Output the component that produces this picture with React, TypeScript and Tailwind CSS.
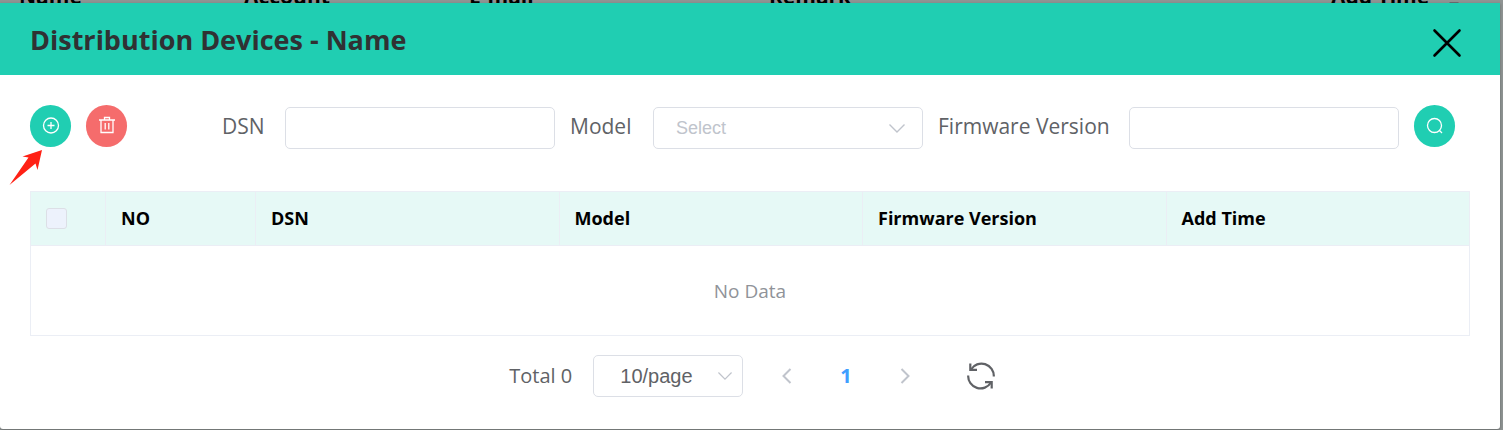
import type { ReactNode } from "react";

const listColumns = ["Name", "Account", "E-mail", "Remark", "Add Time"];
const deviceColumns = ["NO", "DSN", "Model", "Firmware Version", "Add Time"];

function RoundButton({ label, color, children }: { label: string; color: string; children: ReactNode }) {
  return (
    <button
      type="button"
      aria-label={label}
      className={`flex h-[42px] w-[41px] shrink-0 items-center justify-center rounded-full ${color}`}
    >
      <svg viewBox="0 0 20 20" className="size-5" fill="none" stroke="#fff" strokeWidth="1.3">
        {children}
      </svg>
    </button>
  );
}

function Chevron({ className }: { className: string }) {
  return (
    <svg viewBox="0 0 16 9" className={className} fill="none" stroke="#c0c4cc" strokeWidth="1.4">
      <path d="M0.5 0.5 L8 8 L15.5 0.5" />
    </svg>
  );
}

function BackgroundList() {
  return (
    <table aria-hidden="true" className="absolute inset-x-0 -top-5 w-full table-fixed text-left text-[21px] leading-8 font-bold text-black">
      <colgroup>
        <col className="w-[225px]" />
        <col className="w-[225px]" />
        <col className="w-[300px]" />
        <col />
        <col className="w-[191px]" />
      </colgroup>
      <thead>
        <tr>
          {listColumns.map((name) => (
            <th key={name} className="pl-[19px]">
              {name === "Add Time" ? (
                <span className="flex items-end gap-5">
                  {name}
                  <svg viewBox="0 0 10 14" className="mb-1 h-[14px] w-[10px]" fill="#6b6e70">
                    <path d="M0 8 H10 L5 13 Z" />
                  </svg>
                </span>
              ) : (
                name
              )}
            </th>
          ))}
        </tr>
      </thead>
    </table>
  );
}

const fieldBox = "h-[42px] w-full rounded-[5px] border border-[#dcdfe6] bg-white";
const fieldLabel = "shrink-0 pb-1 whitespace-nowrap";

export default function App() {
  return (
    <div className="relative overflow-hidden bg-[#8f9493] pt-[3px] pr-[3px] pb-px font-['Open_Sans','Noto_Sans',sans-serif] text-[#606266]">
      <BackgroundList />
      <section
        role="dialog"
        aria-labelledby="dialog-title"
        className="relative rounded-b-[3px] bg-white pb-8 shadow-[0_1px_3px_rgba(0,0,0,0.3)]"
      >
        <header className="flex h-[72px] items-center justify-between bg-[#20ceb2] pr-[38px] pl-[30px]">
          <h1 id="dialog-title" className="pt-0.5 text-[27px] leading-9 font-bold text-[#303133]">
            Distribution Devices - Name
          </h1>
          <button type="button" aria-label="Close" className="mt-2">
            <svg viewBox="0 0 30 30" className="size-[30px]" fill="none" stroke="#000" strokeWidth="2.6" strokeLinecap="round">
              <path d="M2.5 2.5 L27.5 27.5 M27.5 2.5 L2.5 27.5" />
            </svg>
          </button>
        </header>

        <div className="px-[30px] pt-[30px]">
          <div className="relative flex items-start gap-[15px] pr-[15px]">
            <RoundButton label="Add" color="bg-[#20ceb2]">
              <circle cx="10" cy="9.5" r="7.5" />
              <path d="M10 6 V13 M6.5 9.5 H13.5" />
            </RoundButton>
            <RoundButton label="Delete" color="bg-[#f56c6c]">
              <path d="M2 4 H18 M7.5 3.5 V1.5 H12.5 V3.5 M4 4 V16.5 H16 V4 M8.2 7 V13.5 M11.8 7 V13.5" />
            </RoundButton>
            <svg
              viewBox="0 0 34 37"
              className="pointer-events-none absolute top-[44px] -left-[21px] h-[37px] w-[34px]"
              fill="#ff2115"
              aria-hidden="true"
            >
              <path d="M0.5 36 L19.5 8.5 L13.5 7.5 L33 1 L28.5 21 L26.5 14.5 Z" />
            </svg>

            <form className="mt-0.5 flex min-w-0 flex-1 items-center justify-end gap-[15px] text-[21px] leading-8">
              <div className="flex max-w-[333px] min-w-0 flex-1 items-center">
                <label htmlFor="dsn" className={`${fieldLabel} w-[63px]`}>DSN</label>
                <input id="dsn" type="text" className={`${fieldBox} min-w-0 px-5 text-lg`} />
              </div>
              <div className="flex max-w-[353px] min-w-0 flex-1 items-center">
                <label htmlFor="model" className={`${fieldLabel} w-[83px]`}>Model</label>
                <div className="relative min-w-0 flex-1">
                  <select
                    id="model"
                    defaultValue=""
                    className={`${fieldBox} block appearance-none pl-[22px] font-['Liberation_Sans',sans-serif] text-lg text-[#c0c4cc]`}
                  >
                    <option value="">Select</option>
                  </select>
                  <Chevron className="pointer-events-none absolute top-[17px] right-[18px] h-[9px] w-4" />
                </div>
              </div>
              <div className="flex max-w-[461px] min-w-0 flex-[1.3] items-center">
                <label htmlFor="firmware" className={`${fieldLabel} w-[191px]`}>Firmware Version</label>
                <input id="firmware" type="text" className={`${fieldBox} min-w-0 px-5 text-lg`} />
              </div>
            </form>
            <RoundButton label="Search" color="bg-[#20ceb2]">
              <circle cx="9.5" cy="9.5" r="7" />
              <path d="M14.5 14.5 L17 17" />
            </RoundButton>
          </div>

          <table className="mt-[42px] w-full table-fixed border-collapse border border-[#ebeef5] text-left">
            <colgroup>
              <col className="w-[75px]" />
              <col className="w-[150px]" />
              <col />
              <col />
              <col />
              <col />
            </colgroup>
            <thead>
              <tr className="h-[54px] bg-[#e6f9f6] text-lg text-black">
                <th className="border border-[#ebeef5] pl-[15px]">
                  <input
                    type="checkbox"
                    disabled
                    aria-label="Select all devices"
                    className="block size-[21px] appearance-none rounded-[3px] border border-[#dcdfe6] bg-[#edf2fc]"
                  />
                </th>
                {deviceColumns.map((name) => (
                  <th key={name} className="border border-[#ebeef5] pb-0.5 pl-[15px] font-bold">
                    {name}
                  </th>
                ))}
              </tr>
            </thead>
            <tbody>
              <tr className="h-[90px]">
                <td colSpan={6} className="pt-0.5 text-center text-[19px] text-[#909399]">
                  No Data
                </td>
              </tr>
            </tbody>
          </table>

          <nav aria-label="Pagination" className="mt-[19px] flex items-center justify-center pl-1 text-xl">
            <span className="w-[84px]">Total 0</span>
            <div className="relative w-[150px]">
              <select
                aria-label="Rows per page"
                className={`${fieldBox} block appearance-none pl-[26px] font-['Liberation_Sans',sans-serif] text-xl`}
              >
                <option>10/page</option>
              </select>
              <Chevron className="pointer-events-none absolute top-[17px] right-[11px] h-2 w-[14px]" />
            </div>
            <div className="flex items-center pl-[39px]">
              <button type="button" aria-label="Previous page" disabled>
                <svg viewBox="0 0 10 16" className="h-4 w-[10px]" fill="none" stroke="#c0c4cc" strokeWidth="2">
                  <path d="M8.5 1 L1.5 8 L8.5 15" />
                </svg>
              </button>
              <button type="button" aria-current="page" className="mx-12 font-bold text-[#409eff]">
                1
              </button>
              <button type="button" aria-label="Next page" disabled>
                <svg viewBox="0 0 10 16" className="h-4 w-[10px]" fill="none" stroke="#c0c4cc" strokeWidth="2">
                  <path d="M1.5 1 L8.5 8 L1.5 15" />
                </svg>
              </button>
            </div>
            <button type="button" aria-label="Refresh" className="ml-[57px]">
              <svg viewBox="0 0 28 28" className="size-7" fill="none" stroke="#606266" strokeWidth="2.2">
                <path d="M4 7.5 A12.3 12.3 0 0 1 26.8 14.5 M1.2 13.5 A12.3 12.3 0 0 0 24 20.5" />
                <path d="M3.3 1.5 V7.8 H10 M18 20.2 H24.7 V26.5" />
              </svg>
            </button>
          </nav>
        </div>
      </section>
    </div>
  );
}
